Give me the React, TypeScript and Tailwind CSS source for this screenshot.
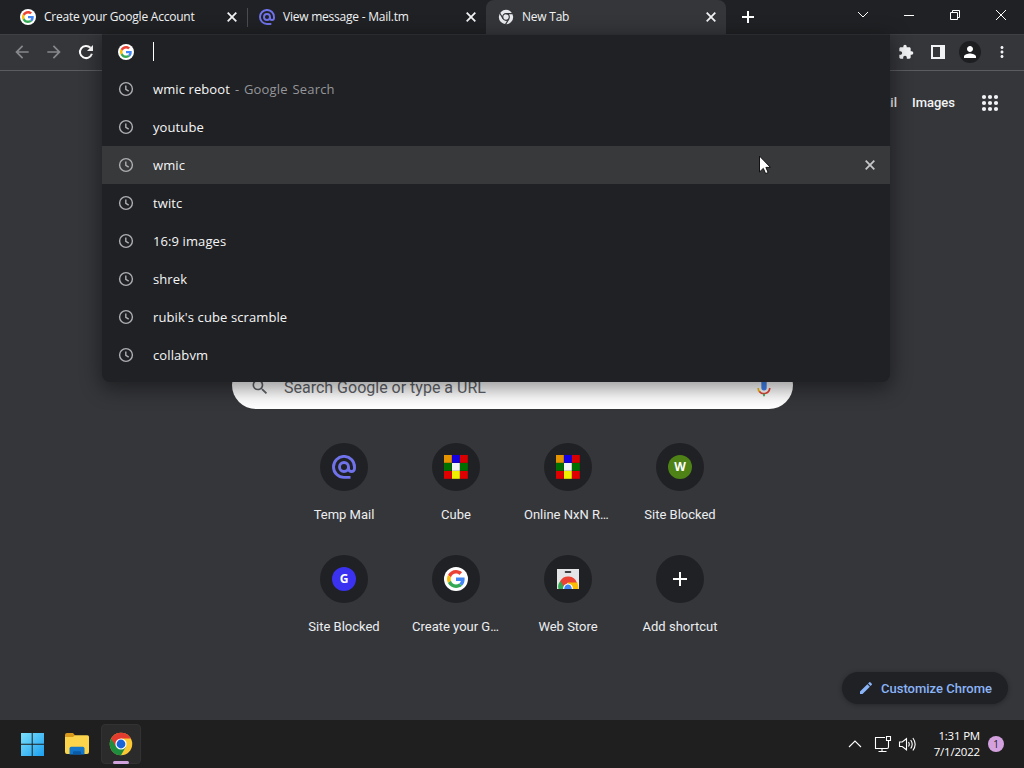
import type { ReactNode } from "react";
import { MdArrowBack, MdArrowForward, MdEdit, MdExtension, MdMoreVert, MdPerson, MdSearch } from "react-icons/md";

function GoogleIcon({ size = 16 }: { size?: number }) {
  return (
    <svg width={size} height={size} viewBox="0 0 64 64" className="shrink-0">
      <circle cx="32" cy="32" r="32" fill="#fff" />
      <g transform="translate(8 8)">
        <path
          fill="#EA4335"
          d="M24 9.5c3.54 0 6.71 1.22 9.21 3.6l6.85-6.85C35.9 2.38 30.47 0 24 0 14.62 0 6.51 5.38 2.56 13.22l7.98 6.19C12.43 13.72 17.74 9.5 24 9.5z"
        />
        <path
          fill="#4285F4"
          d="M46.98 24.55c0-1.57-.15-3.09-.38-4.55H24v9.02h12.94c-.58 2.96-2.26 5.48-4.78 7.18l7.73 6c4.51-4.18 7.09-10.36 7.09-17.65z"
        />
        <path
          fill="#FBBC05"
          d="M10.53 28.59c-.48-1.45-.76-2.99-.76-4.59s.27-3.14.76-4.59l-7.98-6.19C.92 16.46 0 20.12 0 24c0 3.88.92 7.54 2.56 10.78l7.97-6.19z"
        />
        <path
          fill="#34A853"
          d="M24 48c6.48 0 11.93-2.13 15.89-5.81l-7.73-6c-2.15 1.45-4.92 2.3-8.16 2.3-6.26 0-11.57-4.22-13.47-9.91l-7.98 6.19C6.51 42.62 14.62 48 24 48z"
        />
      </g>
    </svg>
  );
}

function MailIcon({ size = 16 }: { size?: number }) {
  return (
    <svg
      width={size}
      height={size}
      viewBox="0 0 24 24"
      fill="none"
      stroke="#6f72ea"
      strokeWidth="2.9"
      className="shrink-0"
    >
      <circle cx="12" cy="12" r="4.5" />
      <path d="M18.5 22.4H12A10.500 10.500 0 1 1 22.500 12v1.500a3 3 0 0 1-6 0V12" />
    </svg>
  );
}

function CloseIcon({ className }: { className: string }) {
  return (
    <svg width="14" height="14" viewBox="0 0 14 14" fill="none" stroke="currentColor" strokeWidth="1.8" className={className}>
      <path d="m2.700 2.700 8.600 8.600M11.300 2.700l-8.600 8.600" />
    </svg>
  );
}

function ClockIcon() {
  return (
    <svg
      width="16"
      height="16"
      viewBox="0 0 16 16"
      fill="none"
      stroke="#aeafb2"
      strokeWidth="1.4"
      className="mr-[19px] shrink-0"
    >
      <circle cx="8" cy="8" r="6.4" />
      <path d="M7.800 4.500V8.300l2.900 1.900" />
    </svg>
  );
}

function ChromeMono() {
  return (
    <svg width="16" height="16" viewBox="0 0 16 16" className="shrink-0">
      <circle cx="8" cy="8" r="7.2" fill="#e8eaed" />
      <g fill="none" stroke="#35363a" strokeWidth="1.2">
        <circle cx="8" cy="8" r="3.3" />
        <path d="M8 4.700h7M5.100 9.700 1.600 3.700M10.900 9.700 7.400 15.600" />
      </g>
    </svg>
  );
}

function ChromeColor() {
  return (
    <svg width="24" height="24" viewBox="0 0 48 48">
      <circle cx="24" cy="24" r="22.5" fill="#fcc934" />
      <path fill="#1e8e3e" d="M4.500 12.750A22.500 22.500 0 0 0 24 46.500l9.750-16.900L24 34z" />
      <path fill="#e33b2e" d="M4.500 12.750A22.500 22.500 0 0 1 43.500 12.750H24L14.300 29.600z" />
      <circle cx="24" cy="24" r="11.2" fill="#fff" />
      <circle cx="24" cy="24" r="8.8" fill="#1a63d8" />
    </svg>
  );
}

function CubeIcon() {
  const cells = ["#e59400", "#1400e0", "#d90000", "#007000", "#f4f4f4", "#007000", "#e00000", "#eef000", "#e00000"];
  return (
    <svg width="24" height="24" viewBox="0 0 24 24">
      {cells.map((fill, i) => (
        <rect key={i} x={(i % 3) * 8} y={Math.floor(i / 3) * 8} width="7.8" height="7.8" fill={fill} />
      ))}
    </svg>
  );
}

function WebStoreIcon() {
  return (
    <svg width="24" height="24" viewBox="0 0 24 24">
      <path fill="#e4e5e6" d="M1 2h22v20H1z" />
      <rect x="8.7" y="4" width="6.600" height="2" rx="1" fill="#3c4043" />
      <path fill="#34a853" d="M4.800 13.500Q1 18 2.500 22H12z" />
      <path fill="#fbbc05" d="M12 15h9q1.500 3 1.500 7H12z" />
      <path fill="#ea4335" d="M4.300 14A9.200 9.200 0 0 1 20.800 15.500H12L8.200 20z" />
      <path fill="#fff" d="M7 22a5 5.500 0 0 1 10 0z" />
      <path fill="#4285f4" d="M8.200 22a3.800 4.500 0 0 1 7.600 0z" />
    </svg>
  );
}

function Letter({ children, className }: { children: ReactNode; className: string }) {
  return (
    <span
      className={`flex size-6 items-center justify-center rounded-full font-['Open_Sans',sans-serif] text-xs font-bold text-white ${className}`}
    >
      {children}
    </span>
  );
}

const history = ["youtube", "wmic", "twitc", "16:9 images", "shrek", "rubik's cube scramble", "collabvm"];

const shortcuts: { label: string; icon: ReactNode; long?: boolean }[] = [
  { label: "Temp Mail", icon: <MailIcon size={24} /> },
  { label: "Cube", icon: <CubeIcon /> },
  { label: "Online NxN R…", icon: <CubeIcon />, long: true },
  { label: "Site Blocked", icon: <Letter className="bg-[#4e8217]">W</Letter> },
  { label: "Site Blocked", icon: <Letter className="bg-[#3a32f0]">G</Letter> },
  { label: "Create your G…", icon: <GoogleIcon size={24} />, long: true },
  { label: "Web Store", icon: <WebStoreIcon /> },
  {
    label: "Add shortcut",
    icon: (
      <svg width="14" height="14" viewBox="0 0 14 14" fill="#fff">
        <path d="M6 0h2v6h6v2H8v6H6V8H0V6h6z" />
      </svg>
    ),
  },
];

function Tab({ icon, title, active, divider }: { icon: ReactNode; title: string; active?: boolean; divider?: boolean }) {
  return (
    <div
      className={`relative flex h-[34px] items-center pr-2 pl-3 ${
        active ? "w-[240px] rounded-t-lg bg-[#35363a]" : "w-[239px]"
      }`}
    >
      {icon}
      <span className="ml-2 flex-1 text-[12px] tracking-[-0.23px] whitespace-nowrap text-[#f1f3f4]">{title}</span>
      <CloseIcon className="text-[#f1f3f4]" />
      {divider && <span className="absolute top-2 -right-px h-[19px] w-px bg-[#4a4c50]" />}
    </div>
  );
}

function TabStrip() {
  return (
    <div className="flex h-[34px] bg-[#202124] pl-2">
      <Tab icon={<GoogleIcon />} title="Create your Google Account" divider />
      <Tab icon={<MailIcon />} title="View message - Mail.tm" />
      <Tab icon={<ChromeMono />} title="New Tab" active />
      <div className="flex w-11 items-center justify-center">
        <svg width="12" height="12" viewBox="0 0 12 12" fill="#fff">
          <path d="M5 0h2v5h5v2H7v5H5V7H0V5h5z" />
        </svg>
      </div>
      <div className="ml-auto flex h-[29px] text-white">
        <WindowButton>
          <path d="m3 5 5 5 5-5" />
        </WindowButton>
        <WindowButton>
          <path d="M3 8.500h10" />
        </WindowButton>
        <WindowButton>
          <path d="M3.500 5.500h7v7h-7zM5.500 5.500v-2h7v7h-2" />
        </WindowButton>
        <WindowButton>
          <path d="m3 3 10 10M13 3 3 13" />
        </WindowButton>
      </div>
    </div>
  );
}

function WindowButton({ children }: { children: ReactNode }) {
  return (
    <button className="flex w-[46px] items-center justify-center">
      <svg width="16" height="16" viewBox="0 0 16 16" fill="none" stroke="currentColor">
        {children}
      </svg>
    </button>
  );
}

function Toolbar() {
  return (
    <div className="flex h-[37px] items-center border-t border-b border-t-[#3f4044] border-b-[#5b5c5f] bg-[#35363a] px-1.5 pb-px text-[#f1f3f4]">
      <button className="flex w-8 justify-center text-[#87888b]">
        <MdArrowBack size={20} />
      </button>
      <button className="flex w-8 justify-center text-[#87888b]">
        <MdArrowForward size={20} />
      </button>
      <button className="flex w-8 justify-center text-white">
        <svg width="16" height="16" viewBox="0 0 16 16">
          <path d="M13.900 9.800A6.100 6.100 0 1 1 12.500 3.800" fill="none" stroke="currentColor" strokeWidth="2" />
          <path d="M15 1v6H9z" fill="currentColor" />
        </svg>
      </button>
      <button className="ml-auto flex w-8 justify-center">
        <MdExtension size={16} />
      </button>
      <button className="flex w-8 justify-center">
        <svg width="14" height="14" viewBox="0 0 14 14" fill="currentColor">
          <path fillRule="evenodd" d="M0 0h14v14H0zM2 2v10h7V2z" />
        </svg>
      </button>
      <button className="flex w-8 justify-center">
        <span className="flex size-[22px] items-center justify-center rounded-full bg-[#1d1e20] text-white">
          <MdPerson size={18} />
        </span>
      </button>
      <button className="flex w-8 justify-center">
        <MdMoreVert size={18} />
      </button>
    </div>
  );
}

function Omnibox() {
  return (
    <div className="absolute top-[34px] left-[102px] h-[348px] w-[788px] rounded-b-lg border-t border-[#2a2b2e] bg-[#202124] shadow-[0_5px_20px_2px_rgba(0,0,0,0.42)]">
      <div className="flex h-[35px] items-center pb-0.5 pl-4">
        <GoogleIcon />
        <span className="ml-[19px] h-[19px] w-px bg-white" />
      </div>
      <div className="flex h-[38px] items-center pl-4 text-[13px]">
        <ClockIcon />
        <span className="pt-0.5 tracking-[0.1px] text-[#f5f6f7]">wmic reboot</span>
        <span className="ml-[5px] pt-0.5 tracking-[0.2px] [word-spacing:1px] text-[#94969a]">- Google Search</span>
      </div>
      {history.map((item) => (
        <div
          key={item}
          className={`flex h-[38px] items-center pr-[13px] pl-4 text-[13px] tracking-[0.1px] text-[#f5f6f7] ${
            item === "wmic" ? "bg-[#38393b]" : ""
          }`}
        >
          <ClockIcon />
          <span className="pt-0.5">{item}</span>
          {item === "wmic" && <CloseIcon className="ml-auto text-[#c6c7c9]" />}
        </div>
      ))}
    </div>
  );
}

function NewTabPage() {
  return (
    <div className="h-[649px] bg-[#35363a] font-[Roboto,sans-serif]">
      <div className="flex h-16 items-center justify-end pr-[25px] text-[13px] font-medium text-[#f1f3f4]">
        <span className="mr-[15px]">Gmail</span>
        <span className="mr-[26px]">Images</span>
        <svg width="18" height="18" viewBox="0 0 18 18" fill="#f1f3f4">
          {[3, 9, 15].map((y) => [3, 9, 15].map((x) => <circle key={`${x}-${y}`} cx={x} cy={y} r="2.1" />))}
        </svg>
      </div>
      <div className="mt-[226px] ml-[232px] flex h-[48px] w-[561px] items-center rounded-full bg-white pt-[5px] pr-[19px] pl-[18px] text-[#5f6368]">
        <MdSearch size={20} className="mb-0.5" />
        <span className="ml-3.5 text-[16px]">Search Google or type a URL</span>
        <svg width="20" height="20" viewBox="0 0 24 24" className="ml-auto">
          <rect x="8.8" y="2" width="6.400" height="13" rx="3.2" fill="#4285f4" />
          <path d="M5 12a7 7 0 0 0 2 5" fill="none" stroke="#fbbc05" strokeWidth="2" />
          <path d="M6.500 16.200a7 7 0 0 0 12.400-4.200" fill="none" stroke="#ea4335" strokeWidth="2" />
          <path fill="#34a853" d="M11 18.500h2V22h-2z" />
        </svg>
      </div>
      <div className="mt-[18px] ml-[288px] grid w-[448px] grid-cols-4">
        {shortcuts.map(({ label, icon, long }, i) => (
          <div key={i} className="flex h-28 flex-col items-center pt-4">
            <div className="flex size-12 items-center justify-center rounded-full bg-[#202124]">{icon}</div>
            <span
              className={`mt-3.5 text-[13px] leading-5 whitespace-nowrap text-[#eceef0] ${long ? "w-[88px]" : ""}`}
            >
              {label}
            </span>
          </div>
        ))}
      </div>
      <div className="mt-[21px] mr-4 ml-auto flex h-8 w-[166px] items-center rounded-full bg-[#202124] pl-4 text-[13px] font-medium text-[#8ab4f8] shadow-[0_1px_5px_rgba(0,0,0,0.3)]">
        <MdEdit size={16} className="mr-[7px]" />
        <span className="pt-px whitespace-nowrap">Customize Chrome</span>
      </div>
    </div>
  );
}

function Taskbar() {
  return (
    <div className="flex h-12 items-center bg-[#1f1f1f] text-white">
      <svg width="24" height="24" viewBox="0 0 24 24" className="ml-5">
        <defs>
          <linearGradient id="win" x1="0" y1="0" x2="1" y2="1">
            <stop offset="0" stopColor="#7be0fc" />
            <stop offset="1" stopColor="#1b9ff0" />
          </linearGradient>
        </defs>
        <path fill="url(#win)" d="M1 1h10.700v10.700H1zM12.700 1H24v10.700H12.700zM1 12.700h10.700V24H1zM12.700 12.700H24V24H12.700z" />
      </svg>
      <svg width="26" height="24" viewBox="0 0 26 24" className="ml-5">
        <path fill="#d99a1c" d="M1 3q0-2 2-2h6l2.500 3v4H1z" />
        <path fill="#fbd44b" d="M1 5h8l2-1.800h12.400q1.600 0 1.600 1.600V20q0 2-2 2H3q-2 0-2-2z" />
        <path fill="#1476c9" d="M5.500 22.500v-6q0-1.700 1.700-1.700h11.600q1.700 0 1.700 1.700v6z" />
        <path fill="#0a5aa5" d="M9 22.500v-2.200q0-1 1-1h6q1 0 1 1v2.200z" />
      </svg>
      <div className="relative ml-[11px] flex size-10 items-center justify-center rounded border border-[#323232] bg-[#2b2b2b]">
        <ChromeColor />
        <span className="absolute -bottom-px left-[11px] h-[3px] w-4 rounded-full bg-[#d1a3dc]" />
      </div>
      <svg
        width="70"
        height="20"
        viewBox="0 0 70 20"
        fill="none"
        stroke="#fff"
        strokeWidth="1.1"
        className="ml-auto"
      >
        <path d="m2 13 6-6 6 6" />
        <path d="M38 3.500h-9.500v11H41M31.500 17.500h8M35 14.500v3M39.500 2.500h4v4h-4zM41.500 6.500v6.500q0 1.500-1.500 1.500" />
        <path d="M52.500 8v4.500h2.700l4.300 3.300V4.700L55.200 8zM61.500 8q1.500 2.200 0 4.500M63.700 6q3 4.200 0 8.500M65.900 4q4.500 6.200 0 12.500" />
      </svg>
      <div className="w-[63px] text-right text-[11.5px] leading-4 tracking-[-0.2px]">
        <div>1:31 PM</div>
        <div>7/1/2022</div>
      </div>
      <span className="mr-5 ml-2 flex size-4 items-center justify-center rounded-full bg-[#d4a1df] text-[10px] text-[#222]">
        1
      </span>
    </div>
  );
}

export default function App() {
  return (
    <div className="relative h-[768px] w-[1024px] overflow-hidden bg-[#35363a] font-['Open_Sans','Noto_Sans',sans-serif]">
      <TabStrip />
      <Toolbar />
      <NewTabPage />
      <Taskbar />
      <Omnibox />
      <svg width="13" height="20" viewBox="0 0 13 20" className="absolute top-[155px] left-[758px]">
        <path d="M1.500 1v16l3.800-3.600 2.300 5.200 2.600-1.100-2.300-5.100h4.600z" fill="#fff" stroke="#111" />
      </svg>
    </div>
  );
}
